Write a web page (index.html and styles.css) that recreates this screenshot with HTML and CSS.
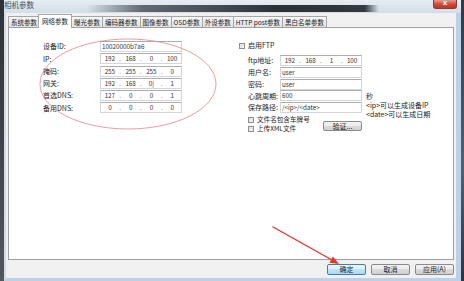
FILE: index.html
```html
<!DOCTYPE html>
<html lang="zh">
<head>
  <meta http-equiv="Content-Type" content="text/html; charset=UTF-8">
  <title>相机参数</title>
  <link rel="stylesheet" href="styles.css">
</head>
<body>
  <div class="screen">
    <div class="edge-left"></div>
    <div class="window">
      <div class="titlebar">
        <span class="title">相机参数</span>
        <span class="close">x</span>
      </div>
      <div class="frame">
        <div class="tabs">
          <span class="tab">系统参数</span>
          <span class="tab active">网络参数</span>
          <span class="tab">曝光参数</span>
          <span class="tab">编码器参数</span>
          <span class="tab">图像参数</span>
          <span class="tab">OSD参数</span>
          <span class="tab">外设参数</span>
          <span class="tab">HTTP post参数</span>
          <span class="tab">黑白名单参数</span>
        </div>
        <div class="panel">
          <div class="col-left">
            <div class="row">
              <span class="label">设备ID:</span>
              <div class="field text">10020000b7a6</div>
            </div>
            <div class="row">
              <span class="label">IP:</span>
              <div class="field ip"><span>192</span><i>.</i><span>168</span><i>.</i><span>0</span><i>.</i><span>100</span></div>
            </div>
            <div class="row">
              <span class="label">掩码:</span>
              <div class="field ip"><span>255</span><i>.</i><span>255</span><i>.</i><span>255</span><i>.</i><span>0</span></div>
            </div>
            <div class="row">
              <span class="label">网关:</span>
              <div class="field ip"><span>192</span><i>.</i><span>168</span><i>.</i><span>0|</span><i>.</i><span>1</span></div>
            </div>
            <div class="row">
              <span class="label">首选DNS:</span>
              <div class="field ip"><span>127</span><i>.</i><span>0</span><i>.</i><span>0</span><i>.</i><span>1</span></div>
            </div>
            <div class="row">
              <span class="label">备用DNS:</span>
              <div class="field ip"><span>0</span><i>.</i><span>0</span><i>.</i><span>0</span><i>.</i><span>0</span></div>
            </div>
          </div>

          <div class="col-right">
            <label class="check"><span class="box"></span>启用FTP</label>
            <div class="ftp">
              <div class="ftp-form">
                <div class="row">
                  <span class="label">ftp地址:</span>
                  <div class="field ip"><span>192</span><i>.</i><span>168</span><i>.</i><span>1</span><i>.</i><span>100</span></div>
                </div>
                <div class="row">
                  <span class="label">用户名:</span>
                  <div class="field text">user</div>
                </div>
                <div class="row">
                  <span class="label">密码:</span>
                  <div class="field text">user</div>
                </div>
                <div class="row">
                  <span class="label">心跳周期:</span>
                  <div class="field text">600</div>
                </div>
                <div class="row">
                  <span class="label">保存路径:</span>
                  <div class="field text">/&lt;ip&gt;/&lt;date&gt;</div>
                </div>
                <div class="extra">
                  <div class="checks">
                    <label class="check"><span class="box"></span>文件名包含车牌号</label>
                    <label class="check"><span class="box"></span>上传XML文件</label>
                  </div>
                  <button class="btn verify">验证...</button>
                </div>
              </div>
              <div class="notes">
                <div>秒</div>
                <div>&lt;ip&gt;可以生成设备IP</div>
                <div>&lt;date&gt;可以生成日期</div>
              </div>
            </div>
          </div>
        </div>
        <div class="footer">
          <button class="btn default">确定</button>
          <button class="btn">取消</button>
          <button class="btn">应用(A)</button>
        </div>
      </div>
    </div>
    <div class="edge-right"></div>
  </div>

  <svg class="marks" width="464" height="281" viewBox="0 0 464 281">
    <ellipse cx="128" cy="84" rx="88" ry="45" fill="none" stroke="#e68484" stroke-width="0.8"/>
    <line x1="273" y1="227" x2="332" y2="260" stroke="#e8332b" stroke-width="1.4" stroke-linecap="round"/>
    <polygon points="339,264 329.5,262.7 332.9,256.6" fill="#e8332b"/>
  </svg>
</body>
</html>
```

FILE: styles.css
```css
* {
  box-sizing: border-box;
}
html, body {
  margin: 0;
}
body {
  width: 464px;
  height: 281px;
  overflow: hidden;
  position: relative;
  font-family: "Noto Sans CJK SC", "DejaVu Sans", sans-serif;
  font-size: 7px;
  line-height: 1.2;
  color: #1c1c1c;
  background: #3b4146;
}
.screen {
  display: flex;
  height: 281px;
}
.edge-left {
  width: 4px;
  background: linear-gradient(#2c3236, #50585e);
}
.edge-right {
  width: 3px;
  background: linear-gradient(#2f3a44, #56616b 60%, #2c343b);
}
.window {
  flex: 1;
  display: flex;
  flex-direction: column;
}
.titlebar {
  height: 13px;
  display: flex;
  align-items: flex-start;
  background:
    linear-gradient(to right, rgba(60, 66, 72, 0) 18%, rgba(60, 66, 72, .75) 30%, rgba(34, 39, 44, .95) 60%, rgba(34, 39, 44, .9) 79%, rgba(60, 66, 72, 0) 82%) 0 5px / 100% 7px no-repeat,
    linear-gradient(#e6edf3, #d2dde8);
}
.title {
  font-size: 7.5px;
  line-height: 10px;
  color: #4a4f55;
  margin-left: 0;
}
.close {
  margin-left: auto;
  margin-right: 4px;
  width: 24px;
  height: 9px;
  border: 1px solid #8c3a32;
  border-top: 0;
  border-radius: 0 0 3px 3px;
  background: linear-gradient(#e59a8e, #c9493a 55%, #b8382a);
  color: #fff;
  font-family: "DejaVu Sans", sans-serif;
  font-size: 7px;
  line-height: 7px;
  text-align: center;
  font-weight: bold;
}
.frame {
  flex: 1;
  display: flex;
  flex-direction: column;
  background: #f0f0f0;
  border-left: 2px solid #d3dce6;
  border-right: 5px solid #bcd1e8;
  border-bottom: 3px solid #bcd1e8;
  padding: 1px 2px 0;
}
.tabs {
  display: flex;
  align-items: flex-end;
  height: 13px;
  position: relative;
  z-index: 1;
}
.tab {
  height: 11px;
  padding: 0 2px;
  margin-right: -1px;
  border: 1px solid #a6a6a6;
  border-bottom: 0;
  background: linear-gradient(#f7f7f7, #e2e2e2);
  font-size: 6.5px;
  line-height: 10px;
  white-space: nowrap;
  color: #222;
}
.tab.active {
  height: 14px;
  margin: 0 -1px -1px -1px;
  padding: 0 3px;
  background: #fff;
  position: relative;
  z-index: 2;
  line-height: 12px;
}
.panel {
  height: 233px;
  background: #fff;
  border: 1px solid #a0a0a0;
  display: flex;
  align-items: flex-start;
  gap: 57px;
  padding: 13px 0 0 34px;
}
.col-left {
  width: 139px;
  display: flex;
  flex-direction: column;
  gap: 1.3px;
}
.row {
  display: flex;
  align-items: center;
  height: 11px;
}
.label {
  width: 57px;
  white-space: nowrap;
}
.ftp-form .label {
  width: 32px;
}
.field {
  width: 82px;
  height: 11px;
  border: 1px solid #d2d6dc;
  border-top-color: #abadb3;
  font-size: 6.3px;
  line-height: 9px;
  color: #333;
  white-space: nowrap;
}
.field.text {
  padding-left: 1px;
}
.field.ip {
  display: flex;
}
.field.ip span {
  flex: 1;
  text-align: center;
}
.field.ip i {
  width: 3px;
  font-style: normal;
  text-align: center;
}
.col-right {
  padding-top: 1px;
  display: flex;
  flex-direction: column;
}
.check {
  display: flex;
  align-items: center;
  gap: 3px;
  height: 7.5px;
  line-height: 7.5px;
  white-space: nowrap;
}
.box {
  flex: none;
  width: 6px;
  height: 6px;
  border: 1px solid #8e8f8f;
  background: linear-gradient(135deg, #dcdcdc, #f6f6f6);
}
.ftp {
  display: flex;
  margin: 5.5px 0 0 9px;
}
.ftp-form {
  width: 114px;
  display: flex;
  flex-direction: column;
  gap: 0.75px;
}
.extra {
  display: flex;
  align-items: center;
  justify-content: space-between;
  margin-top: 2px;
}
.checks {
  display: flex;
  flex-direction: column;
  gap: 2px;
  font-size: 6.6px;
}
.notes {
  margin-left: 4px;
  padding-top: 37px;
  line-height: 9px;
  white-space: nowrap;
}
.btn {
  width: 39px;
  height: 11px;
  padding: 0;
  border: 1px solid #8a8a8a;
  border-radius: 2px;
  background: linear-gradient(#f3f3f3, #ebebeb 50%, #dcdcdc 50%, #cfcfcf);
  font-family: inherit;
  font-size: 7px;
  line-height: 9px;
  color: #1c1c1c;
}
.btn.verify {
  height: 10px;
  margin-top: 3px;
}
.btn.default {
  border-color: #3c7fb1;
  background: linear-gradient(#eaf6fd, #d9f0fc 50%, #bee6fd 50%, #a7d9f5);
}
.footer {
  height: 18px;
  display: flex;
  justify-content: flex-end;
  gap: 5px;
  padding-top: 4px;
}
.marks {
  position: absolute;
  top: 0;
  left: 0;
  pointer-events: none;
}
```
